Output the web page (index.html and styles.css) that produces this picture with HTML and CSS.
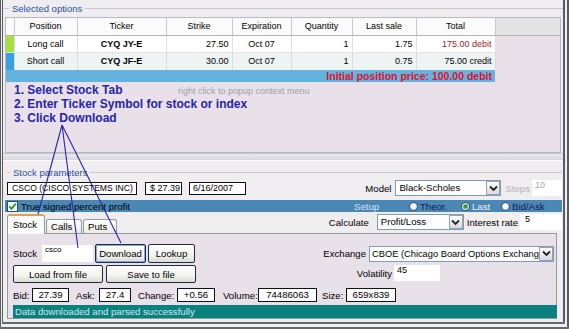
FILE: index.html
```html
<!DOCTYPE html>
<html>
<head>
    <meta charset="UTF-8">
    <title>Selected options - Stock parameters</title>
    <link rel="stylesheet" href="styles.css">
</head>
<body>
    <div class="window">
        <!-- Selected options -->
        <div class="legend-row legend-top"><span class="legend">Selected options</span></div>
        <div class="grid">
            <table class="options">
                <tr class="head">
                    <th class="w-ind"></th>
                    <th class="w-pos">Position</th>
                    <th class="w-tick">Ticker</th>
                    <th class="w-strike">Strike</th>
                    <th class="w-exp">Expiration</th>
                    <th class="w-qty">Quantity</th>
                    <th class="w-last">Last sale</th>
                    <th class="w-total">Total</th>
                    <th class="fill"></th>
                </tr>
                <tr class="row-a">
                    <td class="ind long"></td>
                    <td class="center">Long call</td>
                    <td class="center bold">CYQ JY-E</td>
                    <td class="num">27.50</td>
                    <td class="center">Oct 07</td>
                    <td class="num">1</td>
                    <td class="num">1.75</td>
                    <td class="num debit">175.00 debit</td>
                    <td class="fill"></td>
                </tr>
                <tr class="row-b">
                    <td class="ind short"></td>
                    <td class="center">Short call</td>
                    <td class="center bold">CYQ JF-E</td>
                    <td class="num">30.00</td>
                    <td class="center">Oct 07</td>
                    <td class="num">1</td>
                    <td class="num">0.75</td>
                    <td class="num">75.00 credit</td>
                    <td class="fill"></td>
                </tr>
                <tr class="summary">
                    <td colspan="8">Initial position price: 100.00 debit</td>
                    <td class="fill"></td>
                </tr>
            </table>

            <div class="notes">
                <div class="step-line">
                    <span class="step step-first">1. Select Stock Tab</span>
                    <span class="hint">right click to popup context menu</span>
                </div>
                <div class="step">2. Enter Ticker Symbol for stock or index</div>
                <div class="step">3. Click Download</div>
            </div>
        </div>

        <div class="splitter"></div>

        <!-- Stock parameters -->
        <div class="params">
            <div class="legend-row legend-params"><span class="legend">Stock parameters</span></div>

            <div class="info-row">
                <div class="field-box box-name">CSCO (CISCO SYSTEMS INC)</div>
                <div class="field-box box-price">$ 27.39</div>
                <div class="field-box box-date">6/16/2007</div>

                <div class="model-group">
                    <span class="label">Model</span>
                    <div class="select select-model">
                        <span class="select-text">Black-Scholes</span>
                        <span class="select-arrow"><svg width="9" height="7" viewBox="0 0 9 7"><path d="M1 1.5 L4.5 5 L8 1.5" fill="none" stroke="#222" stroke-width="1.8"/></svg></span>
                    </div>
                    <span class="label muted">Steps</span>
                    <div class="text-input steps-input">10</div>
                </div>
            </div>

            <div class="options-bar">
                <span class="checkbox"><svg width="9" height="9" viewBox="0 0 9 9"><path d="M1.2 4.4 L3.5 6.8 L7.8 1.6" fill="none" stroke="#1f9a2a" stroke-width="1.8"/></svg></span>
                <span class="check-label">True signed percent profit</span>

                <div class="setup-group">
                    <span class="setup">Setup</span>
                    <span class="radio-item item-theor"><span class="radio"></span><span class="radio-text">Theor.</span></span>
                    <span class="radio-item item-last"><span class="radio checked"></span><span class="radio-text light">Last</span></span>
                    <span class="radio-item item-bid"><span class="radio"></span><span class="radio-text">Bid/Ask</span></span>
                </div>
            </div>

            <div class="tabs-row">
                <div class="tabs">
                    <div class="tab tab-active">Stock</div>
                    <div class="tab">Calls</div>
                    <div class="tab">Puts</div>
                </div>
                <div class="calc-group">
                    <span class="label">Calculate</span>
                    <div class="select select-calc">
                        <span class="select-text">Profit/Loss</span>
                        <span class="select-arrow"><svg width="9" height="7" viewBox="0 0 9 7"><path d="M1 1.5 L4.5 5 L8 1.5" fill="none" stroke="#222" stroke-width="1.8"/></svg></span>
                    </div>
                    <span class="label rate-label">Interest rate</span>
                    <div class="text-input rate-input">5</div>
                </div>
            </div>

            <div class="panel">
                <div class="panel-row row-ticker">
                    <span class="label stock-label">Stock</span>
                    <div class="text-input ticker-input">csco</div>
                    <button class="btn btn-download">Download</button>
                    <button class="btn btn-lookup">Lookup</button>

                    <div class="exchange-group">
                        <span class="label">Exchange</span>
                        <div class="select select-exchange">
                            <span class="select-text exchange-text">CBOE (Chicago Board Options Exchang</span>
                            <span class="select-arrow"><svg width="9" height="7" viewBox="0 0 9 7"><path d="M1 1.5 L4.5 5 L8 1.5" fill="none" stroke="#222" stroke-width="1.8"/></svg></span>
                        </div>
                    </div>
                </div>

                <div class="panel-row row-files">
                    <button class="btn btn-file">Load from file</button>
                    <button class="btn btn-file btn-save">Save to file</button>

                    <div class="vol-group">
                        <span class="label">Volatility</span>
                        <div class="text-input vol-input">45</div>
                    </div>
                </div>

                <div class="panel-row row-quote">
                    <span class="label q-bid">Bid:</span>
                    <div class="field-box quote quote-bid">27.39</div>
                    <span class="label q-ask">Ask:</span>
                    <div class="field-box quote quote-ask">27.4</div>
                    <span class="label q-change">Change:</span>
                    <div class="field-box quote quote-change">+0.56</div>
                    <span class="label q-volume">Volume:</span>
                    <div class="field-box quote quote-volume">74486063</div>
                    <span class="label q-size">Size:</span>
                    <div class="field-box quote quote-size">659x839</div>
                </div>

                <div class="status">Data downloaded and parsed successfully</div>
            </div>
        </div>

        <!-- callout lines from the instructions -->
        <svg class="callouts" width="569" height="329" viewBox="0 0 569 329">
            <path d="M62 125 L37 218 M62 125 L78 248 M62 125 L121 243" fill="none" stroke="#2626a6" stroke-width="1.1"/>
        </svg>
    </div>
</body>
</html>
```

FILE: styles.css
```css
* {
    box-sizing: border-box;
}

body {
    margin: 0;
    font-family: "Liberation Sans", Arial, sans-serif;
    font-size: 9.6px;
    color: #000;
    background-color: #efedef;
}

.window {
    position: relative;
    width: 569px;
    height: 329px;
    background-color: #efedef;
    border-left: 3px double #5b5b63;
    border-right: 6px double #5b5b63;
    border-bottom: 7px double #66666e;
    overflow: hidden;
}

/* group box captions */
.legend-row {
    display: flex;
    align-items: center;
    height: 17px;
}

.legend-row::before {
    content: "";
    width: 6px;
    border-top: 1px solid #c9c9cd;
}

.legend-row::after {
    content: "";
    flex: 1;
    border-top: 1px solid #c9c9cd;
}

.legend-params {
    height: 14px;
    margin-top: 1px;
}

.legend-params::before {
    width: 3px;
}

.legend {
    padding: 0 3px;
    color: #2b4ea6;
    font-size: 9.5px;
}

/* options grid */
.grid {
    margin: 0 2px;
    height: 136px;
    border: 1px solid #b9b9bd;
    background-color: #e9e0e9;
}

.options {
    width: 100%;
    table-layout: fixed;
    border-collapse: collapse;
    font-size: 9px;
}

.options th,
.options td {
    padding: 0 3px;
    white-space: nowrap;
    overflow: hidden;
}

.options th {
    height: 17px;
    font-weight: normal;
    background-color: #fbfbfb;
    border-right: 1px solid #c9c9c9;
    border-bottom: 1px solid #b4b4b4;
}

.options th.fill {
    background-color: #e3e5e5;
    border-right: none;
}

.w-ind { width: 8px; }
.w-pos { width: 63px; }
.w-tick { width: 89px; }
.w-strike { width: 66px; }
.w-exp { width: 59px; }
.w-qty { width: 61px; }
.w-last { width: 64px; }
.w-total { width: 79px; }

.row-a td {
    height: 17px;
    background-color: #fff;
    border-right: 1px solid #e0e0e0;
}

.row-b td {
    height: 18px;
    background-color: #eef3f3;
    border-right: 1px solid #dcdcdc;
    border-top: 1px solid #e4e4e4;
}

.options td.fill {
    background-color: transparent;
    border: none;
}

.options .ind {
    padding: 0;
}

.ind.long {
    background-color: #a6e03c;
}

.ind.short {
    background-color: #389fe0;
}

.center {
    text-align: center;
}

.bold {
    font-weight: bold;
}

.num {
    text-align: right;
}

.debit {
    color: #a41c28;
}

.summary td {
    height: 12px;
    padding: 0 3px 0 0;
    background-color: #64b3df;
    color: #e3102c;
    font-weight: bold;
    font-size: 10.5px;
    line-height: 12px;
    text-align: right;
}

/* instructions */
.notes {
    margin-top: 1px;
    padding-left: 8px;
}

.step {
    color: #2525aa;
    font-weight: bold;
    font-size: 12px;
    line-height: 14px;
    white-space: nowrap;
}

.step-line {
    display: flex;
    align-items: baseline;
}

.step-first {
    width: 164px;
}

.hint {
    color: #a0a0a4;
    font-size: 9px;
}

.splitter {
    height: 8px;
    border-top: 1px solid #c4c4c8;
    border-bottom: 1px solid #fdfdfd;
    background: linear-gradient(#e9e9eb, #d9d9dd);
}

/* stock parameters */
.params {
    height: 161px;
    padding: 3px 1px 0 4px;
}

.info-row {
    display: flex;
    align-items: center;
    height: 18px;
}

.field-box {
    height: 13px;
    border: 1px solid #111;
    background-color: #fff;
    font-size: 9px;
    line-height: 11px;
    white-space: nowrap;
    overflow: hidden;
}

.box-name {
    width: 130px;
    margin-right: 8px;
    padding-left: 4px;
    font-size: 8.6px;
}

.box-price {
    width: 37px;
    margin-right: 7px;
    padding-left: 4px;
}

.box-date {
    width: 57px;
    padding-left: 3px;
}

.model-group,
.calc-group,
.exchange-group,
.vol-group {
    display: flex;
    align-items: center;
}

.model-group {
    margin-left: auto;
}

.label {
    white-space: nowrap;
}

.muted {
    color: #b4b4b8;
    margin: 0 2px 0 4px;
}

.select {
    display: flex;
    height: 16px;
    border: 1px solid #7f9db9;
    background-color: #fff;
}

.select-text {
    flex: 1;
    padding-left: 3px;
    line-height: 14px;
    white-space: nowrap;
    overflow: hidden;
}

.exchange-text {
    padding-left: 2px;
    font-size: 9.3px;
}

.select-arrow {
    display: flex;
    align-items: center;
    justify-content: center;
    width: 14px;
    margin: 0;
    border: 1px solid #98a4b4;
    background: linear-gradient(#fdfdfd, #dadadc);
}

.select-model {
    width: 106px;
    margin-left: 4px;
}

.text-input {
    height: 16px;
    background-color: #fff;
    padding: 0 3px;
    font-size: 9px;
    line-height: 11px;
}

.steps-input {
    width: 30px;
    color: #a8a8ac;
}

/* blue option bar */
.options-bar {
    display: flex;
    align-items: center;
    height: 12px;
    margin: 3px 0 0 -2px;
    background-color: #4a87b5;
}

.checkbox {
    display: flex;
    align-items: center;
    justify-content: center;
    width: 11px;
    height: 11px;
    margin-left: 2px;
    border: 1px solid #1c5180;
    background-color: #fff;
}

.check-label {
    margin-left: 3px;
}

.setup-group {
    display: flex;
    align-items: center;
    margin-left: auto;
}

.setup {
    width: 55px;
    color: #cfe4fa;
}

.radio-item {
    display: flex;
    align-items: center;
}

.item-theor { width: 52px; }
.item-last { width: 40px; }
.item-bid { width: 61px; }

.radio {
    width: 9px;
    height: 9px;
    margin-right: 2px;
    border: 1px solid #2f4f7a;
    border-radius: 50%;
    background: radial-gradient(circle at 40% 40%, #fff, #dde4ec);
}

.radio.checked {
    background: radial-gradient(circle, #2aa52a 0 2px, #fff 2.5px);
}

.radio-text {
    color: #0f205e;
}

.radio-text.light {
    color: #eaf3ff;
}

/* tabs */
.tabs-row {
    display: flex;
    height: 21px;
}

.tabs {
    display: flex;
    align-items: flex-end;
}

.tab {
    height: 14px;
    margin-left: 1px;
    padding: 0 4px;
    border: 1px solid #919b9c;
    border-bottom: none;
    border-radius: 3px 3px 0 0;
    background: linear-gradient(#ffffff, #ebeae5);
    line-height: 13px;
}

.tab:nth-child(2) { width: 36px; }
.tab:nth-child(3) { width: 34px; }

.tab-active {
    position: relative;
    z-index: 1;
    width: 38px;
    height: 20px;
    margin-left: 0;
    margin-bottom: -1px;
    padding-left: 5px;
    border-top: 2px solid #e8a040;
    background: #fcfcfe;
    line-height: 17px;
}

.calc-group {
    align-self: flex-start;
    margin: 2px 0 0 auto;
}

.select-calc {
    width: 87px;
    margin-left: 8px;
}

.rate-label {
    margin-left: 3px;
}

.rate-input {
    width: 42px;
    margin-left: 2px;
    padding-left: 5px;
}

/* tab page */
.panel {
    width: 550px;
    height: 86px;
    margin-left: 0;
    padding: 10px 0 0 5px;
    border: 1px solid #919b9c;
    background-color: #e8e1e9;
}

.panel-row {
    display: flex;
    align-items: center;
}

.row-ticker {
    height: 19px;
}

.stock-label {
    width: 29px;
}

.ticker-input {
    width: 51px;
    align-self: flex-start;
    height: 17px;
    margin-top: 1px;
    font-size: 8px;
    line-height: 10px;
}

.btn {
    height: 19px;
    padding: 0;
    font-family: inherit;
    font-size: 9.6px;
    color: #000;
    border: 1px solid #1f2b45;
    border-radius: 2px;
    background: linear-gradient(#ffffff 0%, #f3f3ef 60%, #dcdcd6 100%);
}

.btn-download {
    width: 51px;
    margin-left: 2px;
    box-shadow: inset 0 0 0 1px #86a8dc;
}

.btn-lookup {
    width: 47px;
    margin-left: 2px;
}

.exchange-group {
    margin: 0 2px 0 auto;
}

.select-exchange {
    width: 185px;
    margin-left: 3px;
}

.row-files {
    height: 18px;
    margin-top: 2px;
}

.btn-file {
    width: 90px;
    height: 18px;
}

.btn-save {
    margin-left: 3px;
}

.vol-group {
    margin: -2px 116px 0 auto;
}

.vol-input {
    width: 46px;
    margin-left: 2px;
}

.row-quote {
    height: 14px;
    margin-top: 5px;
}

.quote {
    height: 14px;
    line-height: 12px;
    text-align: center;
    font-size: 9.6px;
}

.q-bid { width: 19px; }
.q-ask { width: 23px; }
.q-change { width: 39px; }
.q-volume { width: 35px; }
.q-size { width: 24px; }

.quote-bid { width: 37px; margin-right: 7px; }
.quote-ask { width: 32px; margin-right: 7px; }
.quote-change { width: 38px; margin-right: 8px; }
.quote-volume { width: 59px; margin-right: 5px; }
.quote-size { width: 50px; }

.status {
    width: 544px;
    height: 13px;
    margin-top: 3px;
    padding-left: 2px;
    background-color: #0a807f;
    color: #cfe9e9;
    line-height: 13px;
}

.callouts {
    position: absolute;
    top: 0;
    left: -3px;
    pointer-events: none;
}
```
